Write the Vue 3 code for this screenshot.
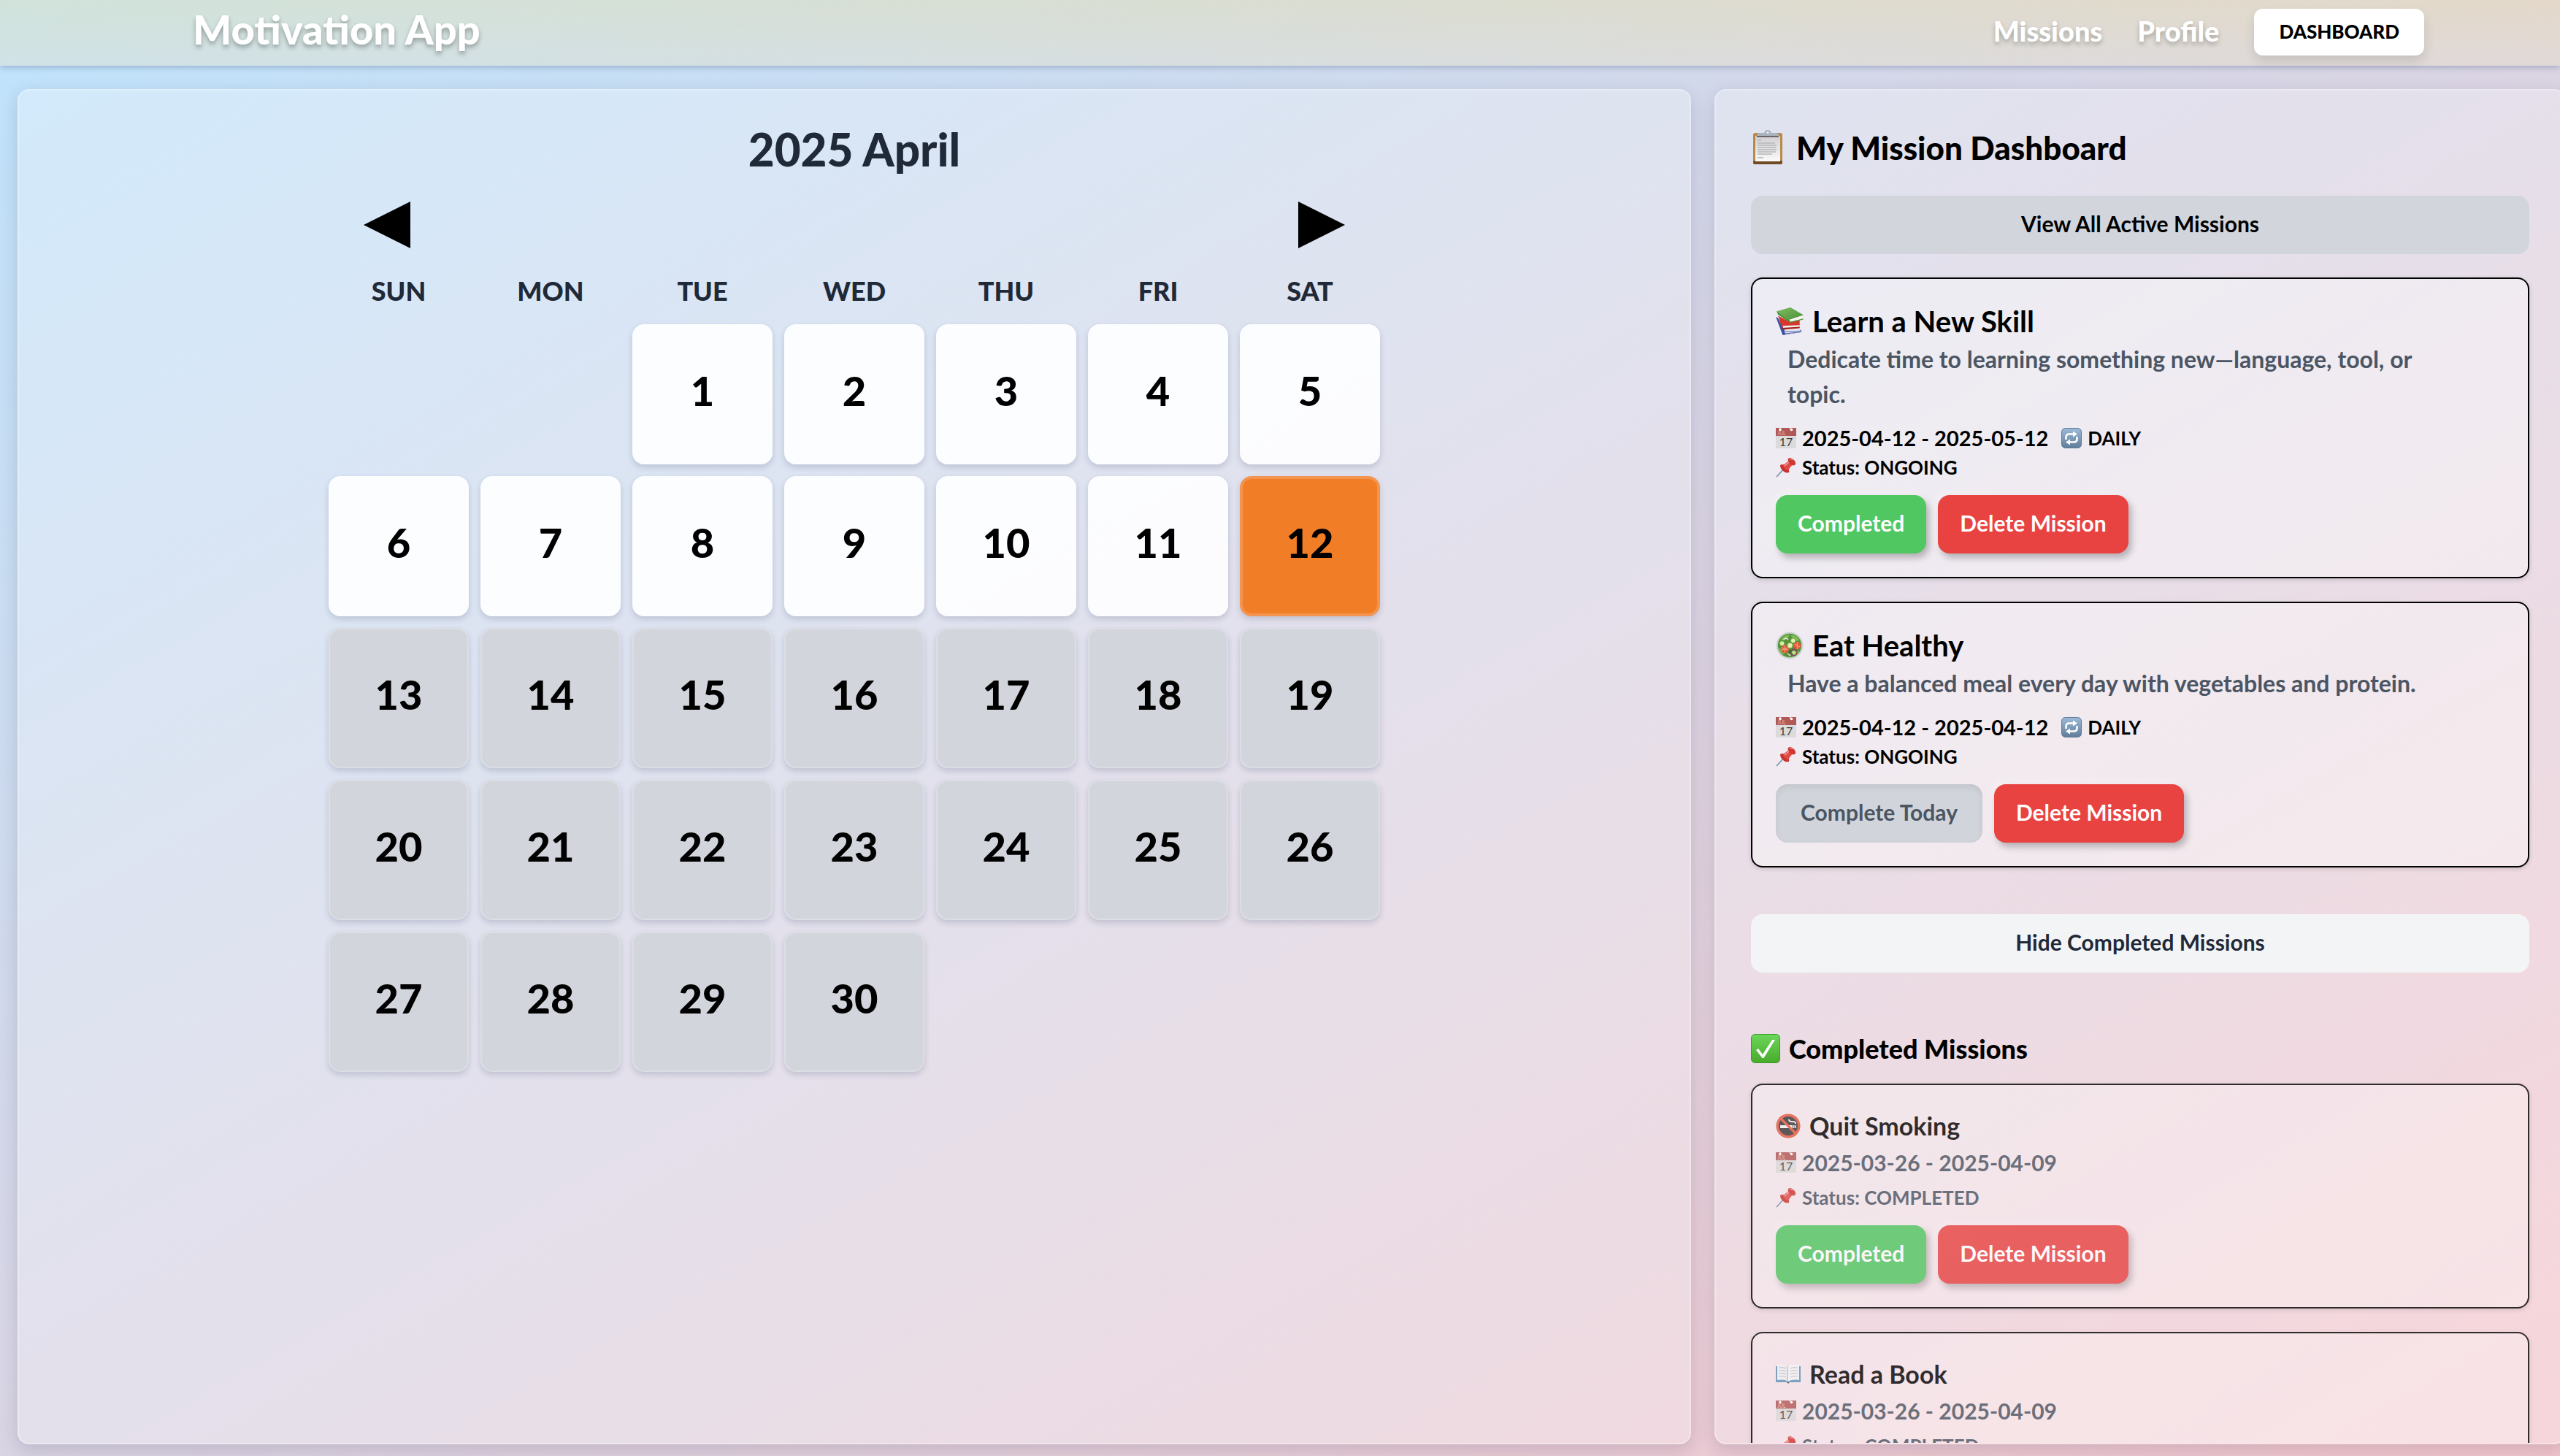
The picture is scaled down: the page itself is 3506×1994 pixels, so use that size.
<script setup>
import { ref, computed } from 'vue'

const weekdays = ['SUN', 'MON', 'TUE', 'WED', 'THU', 'FRI', 'SAT']
const leadingBlanks = 2
const today = 12
const days = Array.from({ length: 30 }, (_, i) => i + 1)

const showCompleted = ref(true)
const toggleLabel = computed(() =>
  showCompleted.value ? 'Hide Completed Missions' : 'Show Completed Missions'
)

const activeMissions = [
  {
    icon: 'books',
    title: 'Learn a New Skill',
    text: 'Dedicate time to learning something new—language, tool, or topic.',
    range: '2025-04-12 - 2025-05-12',
    action: 'Completed',
    done: true
  },
  {
    icon: 'salad',
    title: 'Eat Healthy',
    text: 'Have a balanced meal every day with vegetables and protein.',
    range: '2025-04-12 - 2025-04-12',
    action: 'Complete Today',
    done: false
  }
]

const completedMissions = [
  { icon: 'nosmoking', title: 'Quit Smoking', range: '2025-03-26 - 2025-04-09' },
  { icon: 'openbook', title: 'Read a Book', range: '2025-03-26 - 2025-04-09' }
]

function dayClass(day) {
  if (day === today) return 'today'
  return day < today ? 'past' : 'future'
}
</script>

<template>
  <div class="page">
    <svg class="sprite" aria-hidden="true">
      <defs>
        <linearGradient id="g-paper" x1="0" y1="0" x2="0" y2="1">
          <stop offset="0" stop-color="#cfcfd1" />
          <stop offset="1" stop-color="#fbfbfb" />
        </linearGradient>
        <linearGradient id="g-repeat" x1="0" y1="0" x2="0" y2="1">
          <stop offset="0" stop-color="#9dbad6" />
          <stop offset="1" stop-color="#5f7c9b" />
        </linearGradient>
        <linearGradient id="g-check" x1="0" y1="0" x2="0" y2="1">
          <stop offset="0" stop-color="#6bd65a" />
          <stop offset="1" stop-color="#48ab2c" />
        </linearGradient>
        <linearGradient id="g-green" x1="0" y1="0" x2="1" y2="1">
          <stop offset="0" stop-color="#7fbf62" />
          <stop offset="1" stop-color="#4b8f38" />
        </linearGradient>
        <linearGradient id="g-page" x1="0" y1="0" x2="1" y2="0">
          <stop offset="0" stop-color="#f2f4f5" />
          <stop offset="0.85" stop-color="#eceef0" />
          <stop offset="1" stop-color="#a9b0b6" />
        </linearGradient>
      </defs>
      <symbol id="clipboard" viewBox="0 0 42 48">
        <rect x="1" y="4" width="40" height="43" rx="3" fill="#b98a45" />
        <rect x="1" y="42" width="40" height="5" rx="2" fill="#6f4a22" />
        <rect x="4" y="8" width="34" height="35" fill="url(#g-paper)" />
        <path d="M7 14h5M7 18h24M7 21h26M7 24h25M7 27h26M7 30h25M7 33h20M7 38h8" stroke="#b7b7ba" stroke-width="1.6" />
        <path d="M6 9h30V7c0-2-2-3-5-3h-5c-1-2-2-4-5-4s-4 2-5 4h-5c-3 0-5 1-5 3z" fill="#aab4bf" />
        <path d="M6 9h30" stroke="#6c6468" stroke-width="2" />
        <circle cx="21" cy="3.500" r="1.500" fill="#eef1f4" />
      </symbol>
      <symbol id="books" viewBox="0 0 36 36">
        <path d="M0 12l9 24 24-4v-3l-21 2L3 14z" fill="#3c4f9c" />
        <path d="M11 31l21-3v4l-19 3z" fill="#e9ebf2" />
        <path d="M12 31.500l20-1M12.500 34l19.500-2" stroke="#5a6bb0" stroke-width="1" />
        <path d="M3 11l5 15 23-1v-8L17 18z" fill="#d8372c" />
        <path d="M9 24l22-1v3l-21 1.500z" fill="#f2f2f2" />
        <path d="M8 26.500l23-1.500v2l-21 2z" fill="#a9241d" />
        <path d="M1 5L19 0l17 10-18 6z" fill="url(#g-green)" />
        <path d="M17 16l18-5.500-.5 4.500-16 4z" fill="#f5f5f0" />
        <path d="M1 5l17 11 1 4L3 9.500z" fill="#4f9338" />
        <path d="M18.500 19.500l17-4.500" stroke="#4b8f38" stroke-width="1.200" fill="none" />
      </symbol>
      <symbol id="salad" viewBox="0 0 40 40">
        <circle cx="20" cy="20" r="19.500" fill="#c9d3cd" />
        <circle cx="20" cy="20" r="17" fill="#55913a" />
        <path d="M7 12c4-6 9-8 13-7-2 4-6 7-13 7zM22 5c6 0 10 3 12 8-6 1-11-2-12-8zM5 24c4 0 7 4 7 9-4-1-7-4-7-9zM24 36c1-5 5-8 10-8-1 4-5 7-10 8z" fill="#83bd54" />
        <circle cx="13" cy="25" r="6" fill="#d8563a" />
        <path d="M13 19.500v11M8 23l10 4M18 23L8 27" stroke="#f29b7d" stroke-width="1.200" />
        <circle cx="31" cy="20" r="5.500" fill="#dc5b3c" />
        <path d="M31 15v10M27 18l8 4" stroke="#f29b7d" stroke-width="1.200" />
        <circle cx="20.500" cy="20" r="4" fill="#e5efb4" stroke="#6aa53d" />
        <circle cx="9" cy="17" r="3.500" fill="#deeba9" stroke="#6aa53d" />
        <circle cx="25" cy="13" r="3.500" fill="#e5efb4" stroke="#6aa53d" />
        <circle cx="26" cy="30" r="4.500" fill="none" stroke="#8a3c5c" stroke-width="1.500" />
        <circle cx="26" cy="30" r="2.500" fill="#cfe095" />
        <path d="M11 12c2-3 6-3 7 0M17 31l4 4" stroke="#efe6ea" stroke-width="1.500" fill="none" />
        <path d="M19 26l4 3-5 3z" fill="#2f6a24" />
      </symbol>
      <symbol id="calendar" viewBox="0 0 28 28">
        <rect width="28" height="28" fill="#dcdbdb" />
        <rect width="28" height="11" fill="#b25856" />
        <circle cx="6" cy="2.500" r="1.800" fill="#fff" />
        <circle cx="21.500" cy="2.500" r="1.800" fill="#fff" />
        <path d="M6 0v3M19 0l3 3" stroke="#fff" stroke-width="1.200" />
      </symbol>
      <symbol id="repeat" viewBox="0 0 28 28">
        <rect x=".5" y=".5" width="27" height="27" rx="5" fill="url(#g-repeat)" stroke="#5f7a96" />
        <path d="M6.500 16v-3c0-3 2-4.500 4.500-4.500h6" fill="none" stroke="#fff" stroke-width="2.600" />
        <path d="M16 4.500l6 4-6 4z" fill="#fff" />
        <path d="M21.500 12v3c0 3-2 4.500-4.500 4.500h-6" fill="none" stroke="#fff" stroke-width="2.600" />
        <path d="M12 15.500l-6 4 6 4z" fill="#fff" />
      </symbol>
      <symbol id="pin" viewBox="0 0 28 28">
        <path d="M12 15L1.500 26.500" stroke="#8493a8" stroke-width="1.800" stroke-linecap="round" />
        <path d="M6 11c3-2 6-1 8 1s5 5 4 9c-3 1-6 0-8.500-2.500S6 14 6 11z" fill="#c9332f" />
        <path d="M10 11l8-6 5 5-6 8c-3 0-7-4-7-7z" fill="#e04b45" />
        <path d="M17 2c2-2 5-1 7.500 1.500S28 9 26 11c-2 1-5 0-7-2s-3-5-2-7z" fill="#cf3733" />
        <path d="M19 3c2-1 4 0 5 1" stroke="#f08a84" stroke-width="1.400" fill="none" />
        <path d="M12 12l6-5" stroke="#f4a09a" stroke-width="1.600" />
      </symbol>
      <symbol id="check" viewBox="0 0 40 40">
        <rect x=".5" y=".5" width="39" height="39" rx="5" fill="url(#g-check)" stroke="#3f9a2a" />
        <path d="M7 22l3-2 6 8L29 8h4L17.500 33h-2z" fill="#fff" />
      </symbol>
      <symbol id="nosmoking" viewBox="0 0 34 34">
        <circle cx="17" cy="17" r="16.500" fill="#d9482f" />
        <circle cx="17" cy="17" r="13" fill="#383838" />
        <path d="M6 16h17v4H6z" fill="#f4f4f4" />
        <path d="M24 16h1.500v4H24zM26.500 16H28v4h-1.500z" fill="#f4f4f4" />
        <path d="M27 14c0-3-2-3-5-3s-4-1-4-3" stroke="#f4f4f4" stroke-width="2" fill="none" />
        <path d="M7 7l20 20" stroke="#e85b40" stroke-width="3.200" />
        <circle cx="17" cy="17" r="14.500" fill="none" stroke="#e85b40" stroke-width="2.600" />
      </symbol>
      <symbol id="openbook" viewBox="0 0 34 34">
        <path d="M0 6h34v22H0z" fill="#5f93ba" />
        <path d="M2 4c5-1 11-1 15 2v21c-4-3-10-3-15-2z" fill="url(#g-page)" />
        <path d="M32 4c-5-1-11-1-15 2v21c4-3 10-3 15-2z" fill="#f2f4f5" />
        <path d="M4 8c4-1 7 0 10 1M4 12c4-1 7 0 10 1M4 16c4-1 7 0 10 1M4 20c4-1 7 0 10 1M30 8c-4-1-7 0-10 1M30 12c-4-1-7 0-10 1M30 16c-4-1-7 0-10 1M30 20c-4-1-7 0-10 1" stroke="#bfc4c9" stroke-width="1.200" fill="none" />
        <path d="M15 28h4l-2 2z" fill="#3d4750" />
      </symbol>
    </svg>

    <header class="topbar">
      <h1 class="brand">Motivation App</h1>
      <nav class="nav">
        <a href="#missions">Missions</a>
        <a href="#profile">Profile</a>
        <button type="button" class="dash">DASHBOARD</button>
      </nav>
    </header>

    <main class="columns">
      <section class="panel calendar">
        <h2 class="month">2025 April</h2>
        <div class="arrows">
          <button type="button" aria-label="Previous month">
            <svg viewBox="0 0 64 64"><path d="M64 0v64L0 32z" /></svg>
          </button>
          <button type="button" aria-label="Next month">
            <svg viewBox="0 0 64 64"><path d="M0 0v64l64-32z" /></svg>
          </button>
        </div>
        <div class="grid">
          <div v-for="w in weekdays" :key="w" class="weekday">{{ w }}</div>
          <span v-for="b in leadingBlanks" :key="'b' + b"></span>
          <button v-for="d in days" :key="d" type="button" class="day" :class="dayClass(d)">{{ d }}</button>
        </div>
      </section>

      <section class="panel missions">
        <h2 class="heading"><svg><use href="#clipboard" /></svg>My Mission Dashboard</h2>
        <button type="button" class="bar bar-gray">View All Active Missions</button>

        <article v-for="m in activeMissions" :key="m.title" class="card">
          <h3 class="title"><svg><use :href="'#' + m.icon" /></svg>{{ m.title }}</h3>
          <p class="text">{{ m.text }}</p>
          <p class="meta">
            <svg viewBox="0 0 28 28" class="date">
              <use href="#calendar" />
              <text x="2" y="10" class="jul">JUL</text>
              <text x="14" y="25" class="num">17</text>
            </svg>
            <span class="range">{{ m.range }}</span>
            <svg class="again"><use href="#repeat" /></svg>DAILY
          </p>
          <p class="meta"><svg><use href="#pin" /></svg>Status: ONGOING</p>
          <div class="actions">
            <button type="button" class="btn" :class="m.done ? 'green' : 'gray'">{{ m.action }}</button>
            <button type="button" class="btn red">Delete Mission</button>
          </div>
        </article>

        <button type="button" class="bar bar-light" @click="showCompleted = !showCompleted">{{ toggleLabel }}</button>

        <template v-if="showCompleted">
          <h3 class="subheading"><svg><use href="#check" /></svg>Completed Missions</h3>
          <article v-for="m in completedMissions" :key="m.title" class="card finished">
            <h4 class="title"><svg><use :href="'#' + m.icon" /></svg>{{ m.title }}</h4>
            <p class="meta">
              <svg viewBox="0 0 28 28" class="date">
                <use href="#calendar" />
                <text x="2" y="10" class="jul">JUL</text>
                <text x="14" y="25" class="num">17</text>
              </svg>
              <span class="range">{{ m.range }}</span>
            </p>
            <p class="meta"><svg><use href="#pin" /></svg>Status: COMPLETED</p>
            <div class="actions">
              <button type="button" class="btn green">Completed</button>
              <button type="button" class="btn red">Delete Mission</button>
            </div>
          </article>
        </template>
      </section>
    </main>
  </div>
</template>

<style>
body {
  margin: 0;
}
</style>

<style scoped>
.page {
  box-sizing: border-box;
  height: 100vh;
  padding-bottom: 16px;
  display: flex;
  flex-direction: column;
  overflow: hidden;
  font-family: Lato, "Liberation Sans", sans-serif;
  font-weight: 700;
  color: #000;
  background: linear-gradient(to bottom right, #bfe3fc, #f4c6cc);
}
.page * {
  box-sizing: border-box;
}
.sprite {
  position: absolute;
  width: 0;
  height: 0;
}
h1, h2, h3, h4, p {
  margin: 0;
  font-weight: inherit;
}
button {
  border: 0;
  font: inherit;
  color: inherit;
  cursor: pointer;
}
.topbar {
  display: flex;
  justify-content: space-between;
  align-items: center;
  padding: 12px 186px 14px 264px;
  background: linear-gradient(rgba(250, 226, 140, 0.3), rgba(236, 226, 196, 0.36));
  box-shadow: 0 2px 8px rgba(60, 80, 120, 0.35);
}
.brand {
  padding-bottom: 8px;
  font-size: 56px;
  font-weight: 900;
  line-height: 56px;
  color: #fff;
  text-shadow: 0 4px 6px rgba(0, 0, 0, 0.3);
}
.nav {
  display: flex;
  align-items: center;
  gap: 48px;
}
.nav a {
  padding-bottom: 4px;
  font-size: 38px;
  font-weight: 900;
  line-height: 56px;
  color: #fff;
  text-decoration: none;
  text-shadow: 0 4px 6px rgba(0, 0, 0, 0.25);
}
.dash {
  height: 64px;
  padding: 0 34px 2px;
  border-radius: 12px;
  background: #fff;
  font-size: 26px;
  font-weight: 900;
  box-shadow: 0 8px 16px rgba(0, 0, 0, 0.12);
}
.columns {
  flex: 1;
  min-height: 0;
  display: grid;
  grid-template-columns: 2292fr 1166fr;
  grid-template-rows: 100%;
  gap: 32px;
  margin: 32px -8px 0 24px;
}
.panel {
  padding: 48px;
  border: 2px solid rgba(255, 255, 255, 0.3);
  border-radius: 16px;
  background: rgba(255, 255, 255, 0.28);
  box-shadow: 0 8px 24px rgba(30, 30, 70, 0.16);
  overflow: hidden;
}
.calendar {
  display: flex;
  flex-direction: column;
  align-items: center;
}
.month {
  padding-bottom: 8px;
  font-size: 62px;
  font-weight: 900;
  line-height: 64px;
  color: #1f2937;
}
.arrows {
  display: flex;
  justify-content: space-between;
  width: 1344px;
  margin: 32px 0;
}
.arrows button {
  width: 64px;
  height: 64px;
  padding: 0;
  background: none;
}
.arrows svg {
  display: block;
}
.grid {
  display: grid;
  grid-template-columns: repeat(7, 192px);
  gap: 16px;
}
.weekday {
  font-size: 36px;
  font-weight: 900;
  line-height: 52px;
  padding-bottom: 4px;
  text-align: center;
  color: #1f2937;
}
.day {
  height: 192px;
  padding: 0 0 12px;
  border-radius: 16px;
  font-size: 56px;
  font-weight: 900;
  box-shadow: 0 4px 8px rgba(40, 50, 90, 0.18);
}
.past {
  background: rgba(255, 255, 255, 0.9);
}
.today {
  border: 4px solid #f39450;
  background: #f17e27;
}
.future {
  border: 2px solid #dcdee3;
  background: #d2d6dc;
}
.missions {
  display: flex;
  flex-direction: column;
}
.missions > * {
  flex-shrink: 0;
}
.heading,
.subheading,
.title,
.meta {
  display: flex;
  align-items: center;
}
.heading {
  gap: 16px;
  margin-bottom: 36px;
  font-size: 44px;
  font-weight: 900;
  line-height: 60px;
}
.heading svg {
  width: 46px;
  height: 48px;
}
.bar {
  height: 80px;
  padding: 0 32px 4px;
  border-radius: 16px;
  font-size: 30px;
}
.bar-gray {
  background: #d2d6dc;
}
.bar-light {
  margin-top: 64px;
  background: #f3f4f6;
  color: #1f2937;
}
.card {
  margin-top: 32px;
  padding: 30px 32px 32px;
  border: 2px solid #000;
  border-radius: 16px;
  background: rgba(255, 255, 255, 0.38);
  box-shadow: 0 2px 6px rgba(0, 0, 0, 0.15);
}
.title {
  gap: 12px;
  font-size: 40px;
  line-height: 56px;
}
.title svg {
  width: 38px;
  height: 40px;
}
.text {
  padding: 0 64px 0 16px;
  margin-bottom: 16px;
  font-size: 32px;
  line-height: 48px;
  color: #4b5563;
}
.meta {
  gap: 8px;
  font-size: 26px;
  line-height: 40px;
}
.range {
  font-size: 29px;
}
.meta svg {
  width: 28px;
  height: 28px;
}
.jul {
  font-size: 7px;
  font-weight: 400;
  fill: #e3b7b5;
}
.num {
  font-size: 16px;
  font-weight: 400;
  text-anchor: middle;
  fill: #3d3d3d;
}
.meta .again {
  margin-left: 10px;
}
.actions {
  display: flex;
  gap: 16px;
  margin-top: 18px;
}
.btn {
  height: 80px;
  padding: 0 30px 4px;
  border-radius: 16px;
  font-size: 30px;
  color: #fff;
  box-shadow: 4px 6px 10px rgba(0, 0, 0, 0.25), -4px -4px 10px rgba(255, 255, 255, 0.3);
}
.green {
  background: #50c760;
}
.red {
  background: #e84341;
}
.gray {
  padding: 0 34px 4px;
  background: #d1d5db;
  color: #4b5563;
  box-shadow: inset 0 4px 8px rgba(0, 0, 0, 0.08);
}
.subheading {
  gap: 12px;
  margin-top: 76px;
  font-size: 36px;
  font-weight: 900;
  line-height: 56px;
}
.subheading svg {
  width: 40px;
  height: 40px;
}
.finished {
  opacity: 0.8;
}
.subheading + .finished {
  margin-top: 20px;
}
.finished .title {
  font-size: 34px;
  line-height: 52px;
}
.finished .title svg {
  width: 34px;
  height: 34px;
}
.finished .meta {
  line-height: 48px;
  color: #4b5563;
}
.finished .range {
  font-size: 30px;
}
.finished .actions {
  margin-top: 14px;
}
</style>
